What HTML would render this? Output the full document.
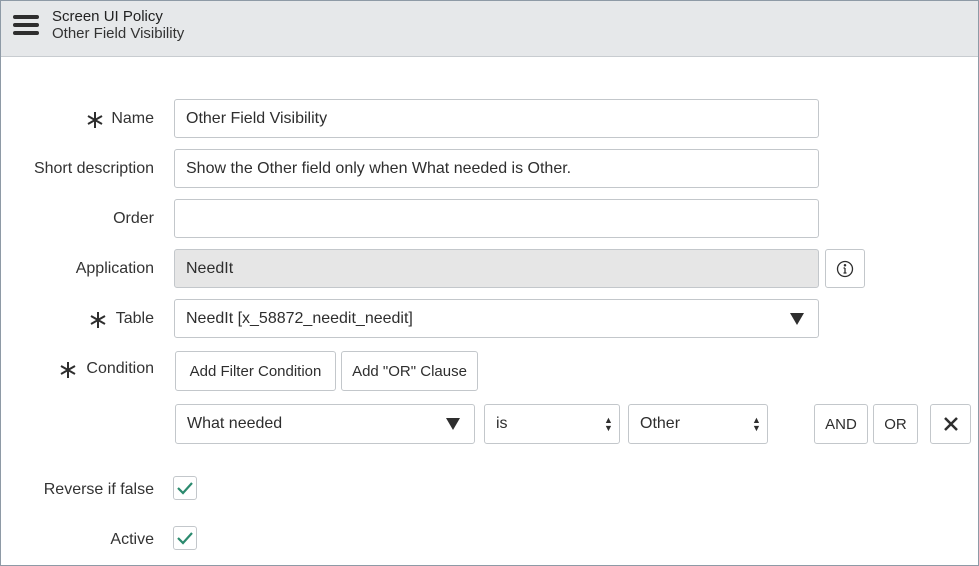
<!DOCTYPE html><html><head><style>
body{margin:0;width:979px;height:566px;overflow:hidden;background:#fff;font-family:"Liberation Sans",sans-serif;color:#2e2e2e;position:relative}
.frame{position:absolute;left:0;top:0;width:977px;height:564px;border:1px solid #8e9aa6;}
.hdr{position:absolute;left:1px;top:1px;width:977px;height:55px;background:#e6e8ea;border-bottom:1px solid #c8ccd0}
.t1{position:absolute;left:51px;top:7px;font-size:15px;color:#222}
.t2{position:absolute;left:51px;top:24px;font-size:15px;color:#333}
.bar{position:absolute;left:12px;width:26px;height:4px;background:#2e2e2e;border-radius:2px}
.lbl{position:absolute;right:825px;font-size:16px;color:#333;text-align:right;white-space:nowrap}
.in{position:absolute;box-sizing:border-box;border:1px solid #c3c7cb;border-radius:3px;background:#fff;font-size:16px;padding-left:11px;display:flex;align-items:center;color:#2e2e2e}
.btn{position:absolute;box-sizing:border-box;border:1px solid #c3c7cb;border-radius:3px;background:#fff;font-size:15px;display:flex;align-items:center;justify-content:center;color:#2e2e2e}
.tri{position:absolute;width:0;height:0;border-left:7px solid transparent;border-right:7px solid transparent;border-top:12px solid #2e2e2e}
.ud{position:absolute;font-size:9px;line-height:8px}
.cb{position:absolute;left:173px;width:24px;height:24px;box-sizing:border-box;border:1px solid #c3c7cb;border-radius:3px}
</style></head><body>
<div class="frame"></div>
<div class="hdr">
<div class="bar" style="top:14px"></div><div class="bar" style="top:22px"></div><div class="bar" style="top:30px"></div>
<div class="t1">Screen UI Policy</div><div class="t2">Other Field Visibility</div></div>

<div class="lbl" style="top:110px">Name</div>
<svg style="position:absolute;left:86px;top:111px" width="18" height="18" viewBox="0 0 18 18" stroke="#2e2e2e" stroke-width="2"><path d="M9 1V17M2 5L16 13M2 13L16 5"/></svg>
<div class="in" style="left:174px;top:99px;width:645px;height:39px">Other Field Visibility</div>
<div class="lbl" style="top:160px">Short description</div>
<div class="in" style="left:174px;top:149px;width:645px;height:39px">Show the Other field only when What needed is Other.</div>
<div class="lbl" style="top:210px">Order</div>
<div class="in" style="left:174px;top:199px;width:645px;height:39px"></div>
<div class="lbl" style="top:260px">Application</div>
<div class="in" style="left:174px;top:249px;width:645px;height:39px;background:#e6e6e6">NeedIt</div>
<div class="btn" style="left:825px;top:249px;width:40px;height:39px"><svg width="18" height="18" viewBox="0 0 18 18" fill="none" stroke="#2e2e2e" stroke-width="1.3"><circle cx="9" cy="9" r="7.5"/><path d="M9 8V13M7.5 13H10.5M7.5 8H9"/><circle cx="9" cy="5.3" r=".6" fill="#2e2e2e"/></svg></div>
<div class="lbl" style="top:310px">Table</div>
<svg style="position:absolute;left:89px;top:311px" width="18" height="18" viewBox="0 0 18 18" stroke="#2e2e2e" stroke-width="2"><path d="M9 1V17M2 5L16 13M2 13L16 5"/></svg>
<div class="in" style="left:174px;top:299px;width:645px;height:39px">NeedIt [x_58872_needit_needit]</div>
<div class="tri" style="left:790px;top:313px"></div>
<div class="lbl" style="top:360px">Condition</div>
<svg style="position:absolute;left:59px;top:361px" width="18" height="18" viewBox="0 0 18 18" stroke="#2e2e2e" stroke-width="2"><path d="M9 1V17M2 5L16 13M2 13L16 5"/></svg>
<div class="btn" style="left:175px;top:351px;width:161px;height:40px">Add Filter Condition</div>
<div class="btn" style="left:341px;top:351px;width:137px;height:40px">Add "OR" Clause</div>
<div class="in" style="left:175px;top:404px;width:300px;height:40px">What needed</div>
<div class="tri" style="left:446px;top:418px"></div>
<div class="in" style="left:484px;top:404px;width:136px;height:40px">is</div>
<div class="ud" style="left:604px;top:416px">▲<br>▼</div>
<div class="in" style="left:628px;top:404px;width:140px;height:40px">Other</div>
<div class="ud" style="left:752px;top:416px">▲<br>▼</div>
<div class="btn" style="left:814px;top:404px;width:54px;height:40px">AND</div>
<div class="btn" style="left:873px;top:404px;width:45px;height:40px">OR</div>
<div class="btn" style="left:930px;top:404px;width:41px;height:40px"><svg width="16" height="16" viewBox="0 0 16 16" stroke="#2e2e2e" stroke-width="2.5"><path d="M2 2L14 14M14 2L2 14"/></svg></div>
<div class="lbl" style="top:481px">Reverse if false</div>
<div class="cb" style="top:476px"><svg width="22" height="22" viewBox="0 0 22 22" fill="none" stroke="#2b8a6e" stroke-width="2.2"><path d="M4 11L9 16L18 6"/></svg></div>
<div class="lbl" style="top:531px">Active</div>
<div class="cb" style="top:526px"><svg width="22" height="22" viewBox="0 0 22 22" fill="none" stroke="#2b8a6e" stroke-width="2.2"><path d="M4 11L9 16L18 6"/></svg></div>
</body></html>
